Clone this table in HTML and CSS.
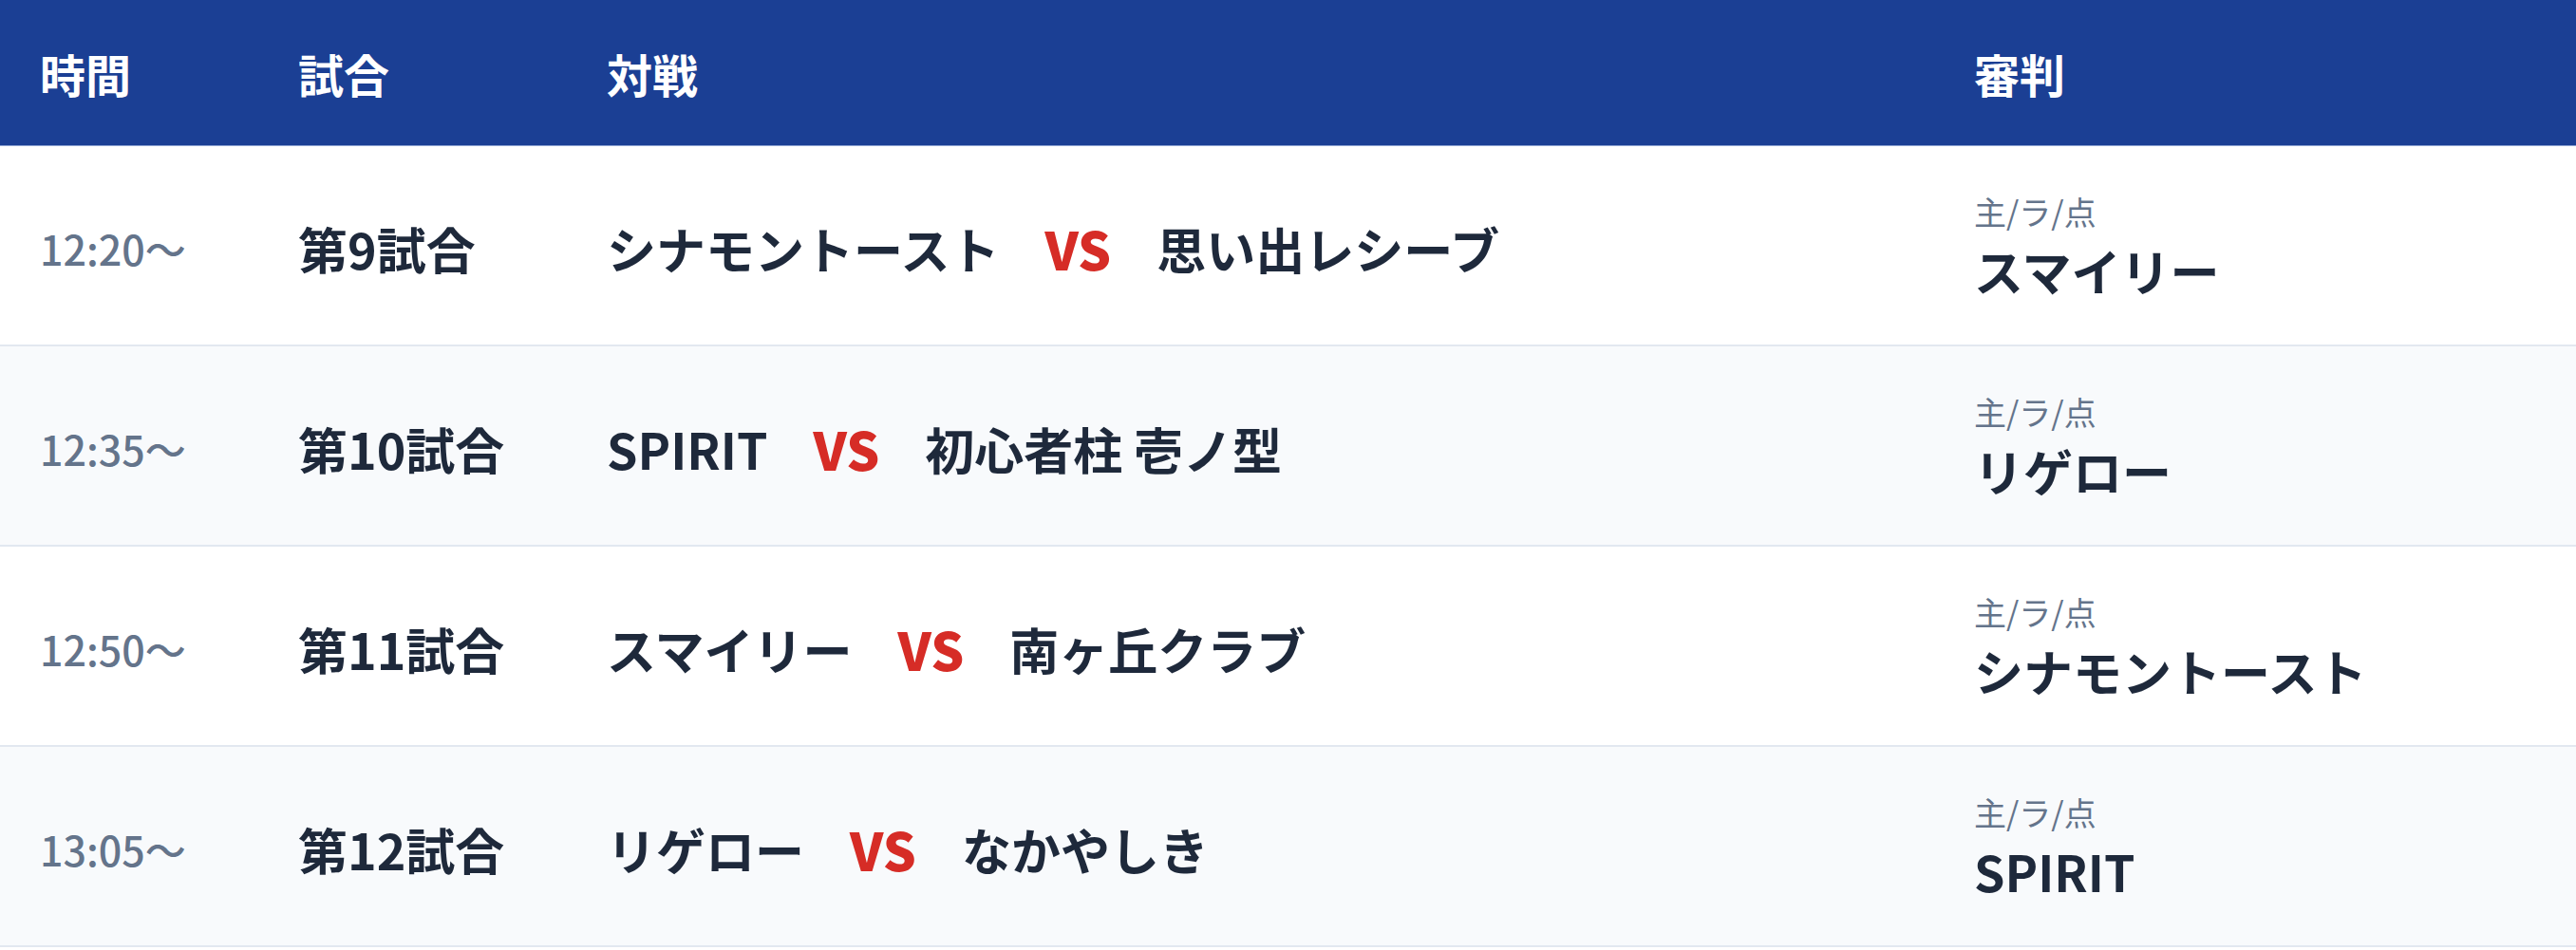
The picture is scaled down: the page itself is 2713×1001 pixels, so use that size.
FILE: index.html
```html
<!DOCTYPE html>
<html lang="ja">
<head>
<meta charset="utf-8">
<title>試合スケジュール</title>
<link rel="stylesheet" href="styles.css">
</head>
<body>
<div class="schedule">
  <div class="row head">
    <div class="cell">時間</div>
    <div class="cell">試合</div>
    <div class="cell">対戦</div>
    <div class="cell">審判</div>
  </div>
  <div class="row">
    <div class="cell time">12:20〜</div>
    <div class="cell match">第9試合</div>
    <div class="cell teams"><span class="team">シナモントースト</span><span class="vs">VS</span><span class="team">思い出レシーブ</span></div>
    <div class="cell ref"><span class="ref-label">主/ラ/点</span><span class="ref-name">スマイリー</span></div>
  </div>
  <div class="row alt">
    <div class="cell time">12:35〜</div>
    <div class="cell match">第10試合</div>
    <div class="cell teams"><span class="team">SPIRIT</span><span class="vs">VS</span><span class="team">初心者柱 壱ノ型</span></div>
    <div class="cell ref"><span class="ref-label">主/ラ/点</span><span class="ref-name">リゲロー</span></div>
  </div>
  <div class="row">
    <div class="cell time">12:50〜</div>
    <div class="cell match">第11試合</div>
    <div class="cell teams"><span class="team">スマイリー</span><span class="vs">VS</span><span class="team">南ヶ丘クラブ</span></div>
    <div class="cell ref"><span class="ref-label">主/ラ/点</span><span class="ref-name">シナモントースト</span></div>
  </div>
  <div class="row alt">
    <div class="cell time">13:05〜</div>
    <div class="cell match">第12試合</div>
    <div class="cell teams"><span class="team">リゲロー</span><span class="vs">VS</span><span class="team">なかやしき</span></div>
    <div class="cell ref"><span class="ref-label">主/ラ/点</span><span class="ref-name">SPIRIT</span></div>
  </div>
</div>
</body>
</html>
```

FILE: styles.css
```css
html, body {
  margin: 0;
  padding: 0;
  background: #ffffff;
}

body {
  font-family: "Noto Sans CJK JP", "Noto Sans", sans-serif;
  color: #1e293b;
}

.schedule {
  width: 100%;
}

.row {
  display: grid;
  grid-template-columns: 272px 325px 1440px 1fr;
  align-items: center;
  height: 211px;
  box-sizing: border-box;
  border-bottom: 2px solid #e2e8f0;
  background: #ffffff;
  padding-top: 5px;
}

.row.alt {
  background: #f8fafc;
}

.row.head {
  height: 154px;
  padding-top: 0;
  background: #1b3f94;
  border-bottom: 1px solid #8ea4d2;
  color: #ffffff;
  font-weight: 700;
  font-size: 48px;
}

.cell {
  padding: 0 42px;
}

.time {
  font-size: 43px;
  color: #64748b;
  font-weight: 500;
}

.match {
  font-size: 52px;
  font-weight: 700;
}

.teams {
  display: flex;
  align-items: center;
  gap: 48px;
  font-size: 52px;
  font-weight: 700;
}

.vs {
  color: #d62c26;
  font-weight: 900;
  font-size: 55px;
}

.ref {
  display: flex;
  flex-direction: column;
  align-items: flex-start;
  margin-top: -5px;
}

.ref-label {
  font-size: 34px;
  line-height: 1.3;
  color: #64748b;
}

.ref-name {
  font-size: 52px;
  font-weight: 700;
  line-height: 1.2;
  margin-top: 9px;
}
```
